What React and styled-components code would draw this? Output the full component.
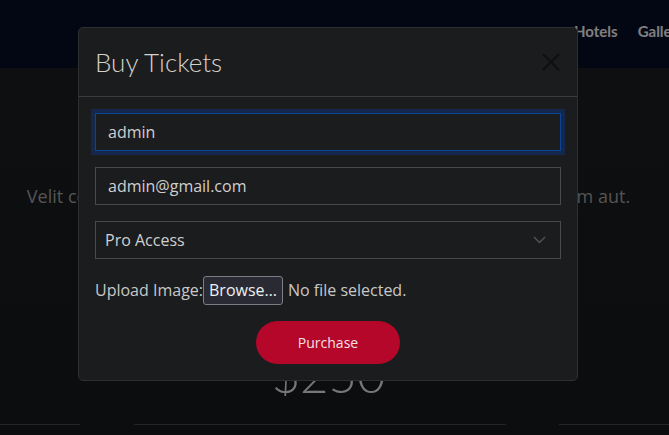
import React from 'react'
import styled, { createGlobalStyle } from 'styled-components'

const GlobalStyle = createGlobalStyle`
  html, body {
    margin: 0;
    padding: 0;
    background: #1c1e20;
    overflow: hidden;
  }
  * { box-sizing: border-box; }
`

const Page = styled.div`
  width: 669px;
  height: 435px;
  position: relative;
  overflow: hidden;
  background: linear-gradient(#1e2022, #181a1c);
  font-family: "Open Sans", sans-serif;
`

const Navbar = styled.header`
  height: 68px;
  background: #060c26;
  display: flex;
  align-items: flex-start;
  padding: 22px 0 0 574px;
  gap: 20px;
  white-space: nowrap;
`

const NavLink = styled.a`
  font-family: "Lato", sans-serif;
  font-weight: 700;
  font-size: 15px;
  color: #ffffff;
`

const Section = styled.section`
  padding: 116px 0 0;
  text-align: center;
`

const Lead = styled.p`
  margin: 0 -54px 0 -66px;
  font-size: 18px;
  color: #a8a8a8;
  white-space: nowrap;
`

const Pricing = styled.div`
  display: grid;
  grid-template-columns: 80px 372px 110px;
  justify-content: space-between;
  align-items: end;
  margin: 144px 0 0;
`

const PriceCard = styled.div`
  display: flex;
  flex-direction: column;
  align-items: center;
`

const Price = styled.div`
  margin-left: 18px;
  font-family: "Lato", sans-serif;
  font-weight: 300;
  font-size: 49px;
  line-height: 44px;
  color: #eee;
  height: 44px;
  overflow: hidden;
`

const Rule = styled.hr`
  width: 100%;
  border: 0;
  border-top: 1px solid #4a4c50;
  margin: 28px 0 0;
`

const Backdrop = styled.div`
  position: absolute;
  inset: 0;
  background: rgba(0, 0, 0, 0.5);
`

const Modal = styled.div`
  position: absolute;
  top: 27px;
  left: 78px;
  width: 500px;
  background: #1b1c1e;
  border: 1px solid #2e2f31;
  border-radius: 5px;
  color: #cdcdcd;
`

const ModalHeader = styled.div`
  display: flex;
  justify-content: space-between;
  align-items: center;
  padding: 16px;
  border-bottom: 1px solid #3c3d40;
`

const Title = styled.h5`
  margin: 0;
  font-family: "Lato", sans-serif;
  font-weight: 300;
  font-size: 26px;
  line-height: 36px;
  color: #d4d0ca;
`

const Close = styled.button`
  background: none;
  border: 0;
  padding: 0;
  width: 20px;
  height: 20px;
  display: flex;
  align-items: center;
  justify-content: center;
`

const ModalBody = styled.form`
  padding: 16px;
  display: flex;
  flex-direction: column;
  gap: 16px;
`

const Input = styled.input`
  width: 100%;
  height: 38px;
  background: #1b1c1e;
  border: 1px solid ${({ $focused }) => ($focused ? '#0c4394' : '#48494b')};
  box-shadow: ${({ $focused }) => ($focused ? '0 0 0 4px #14284d' : 'none')};
  color: #cfcfcf;
  font-family: "Open Sans", sans-serif;
  font-size: 16px;
  padding: 0 12px;
  outline: none;
  border-radius: 0;
`

const SelectBox = styled.div`
  height: 38px;
  border: 1px solid #48494b;
  display: flex;
  align-items: center;
  justify-content: space-between;
  padding: 0 14px 0 9px;
  font-size: 16px;
  color: #cfcfcf;
`

const UploadRow = styled.div`
  display: flex;
  align-items: center;
  font-size: 16px;
  color: #c8c8c8;
  height: 30px;
`

const Browse = styled.span`
  display: inline-flex;
  align-items: center;
  height: 29px;
  padding: 0 5px;
  margin: 0 5px 0 0;
  background: #2a2a34;
  border: 1px solid #7d7d86;
  border-radius: 3px;
  color: #f0f0f0;
`

const Purchase = styled.button`
  align-self: center;
  width: 144px;
  height: 43px;
  border: 0;
  border-radius: 22px;
  background: #b5072a;
  color: #f3e0e4;
  font-family: "Open Sans", sans-serif;
  font-size: 14px;
`

export default function App() {
  return (
    <Page>
      <GlobalStyle />
      <Navbar>
        <NavLink>Hotels</NavLink>
        <NavLink>Gallery</NavLink>
      </Navbar>
      <Section>
        <Lead>Velit consequatur consequatur inventore iste fugit unde omnis eum aut.</Lead>
        <Pricing>
          <PriceCard><Rule /></PriceCard>
          <PriceCard>
            <Price>$250</Price>
            <Rule />
          </PriceCard>
          <PriceCard><Rule /></PriceCard>
        </Pricing>
      </Section>
      <Backdrop />
      <Modal>
        <ModalHeader>
          <Title>Buy Tickets</Title>
          <Close aria-label="Close">
            <svg width="18" height="18" viewBox="0 0 18 18">
              <path d="M1 1 L17 17 M17 1 L1 17" stroke="#0f0f10" strokeWidth="2" />
            </svg>
          </Close>
        </ModalHeader>
        <ModalBody>
          <Input $focused defaultValue="admin" />
          <Input defaultValue="admin@gmail.com" />
          <SelectBox>
            <span>Pro Access</span>
            <svg width="13" height="8" viewBox="0 0 13 8">
              <path d="M1 1 L6.5 6.5 L12 1" stroke="#555" strokeWidth="1.3" fill="none" />
            </svg>
          </SelectBox>
          <UploadRow>
            Upload Image:<Browse>Browse…</Browse>No file selected.
          </UploadRow>
          <Purchase type="button">Purchase</Purchase>
        </ModalBody>
      </Modal>
    </Page>
  )
}
